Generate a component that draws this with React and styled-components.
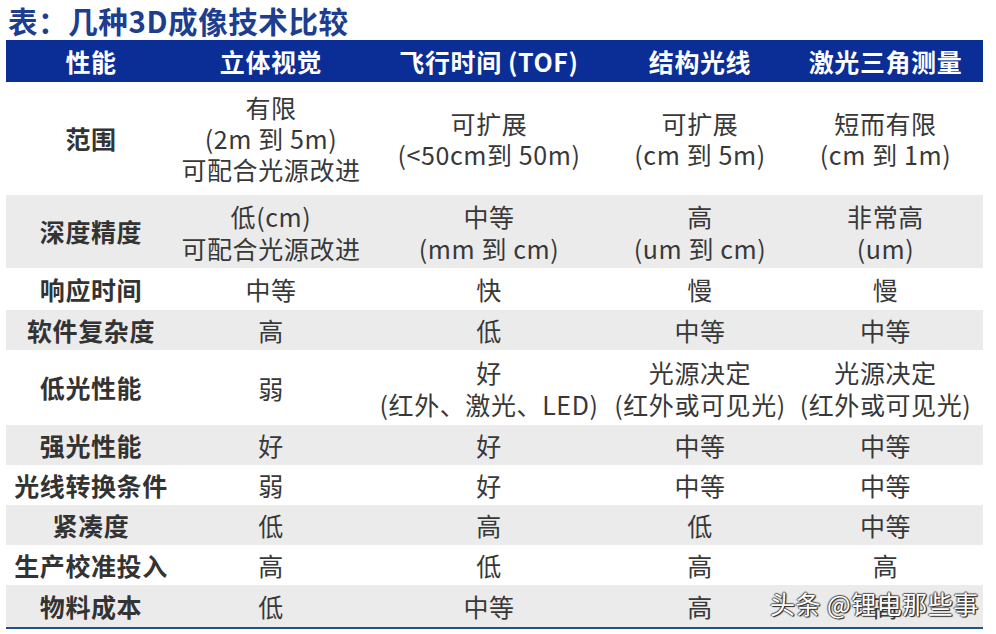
import styled, { createGlobalStyle } from "styled-components";

const GlobalStyle = createGlobalStyle`
  html, body {
    margin: 0;
    padding: 0;
    background: #fff;
  }
  body {
    font-family: "Noto Sans CJK SC", "Noto Sans", sans-serif;
  }
`;

const COLS = "170px 190px 246px 176px 195px";

const Page = styled.div`
  position: relative;
  width: 996px;
  height: 634px;
  padding: 0 0 0 6px;
  box-sizing: border-box;
  overflow: hidden;
`;

const Title = styled.h1`
  margin: 0;
  padding: 0 0 0 2px;
  height: 40px;
  font-size: 29.5px;
  line-height: 40px;
  font-weight: 700;
  color: #1d3d8f;
  letter-spacing: 0.6px;
  white-space: nowrap;
`;

const Table = styled.div`
  width: 977px;
  border-bottom: 2px solid #24508f;
`;

const HeaderRow = styled.div`
  display: grid;
  grid-template-columns: ${COLS};
  height: 42px;
  align-items: center;
  background: #0a2d96;
  color: #fff;
  font-size: 25px;
  font-weight: 700;
  letter-spacing: 0.6px;
`;

const HeadCell = styled.div`
  text-align: center;
  line-height: 1.2;
  white-space: nowrap;
`;

const Row = styled.div`
  display: grid;
  grid-template-columns: ${COLS};
  height: ${(p) => p.$h}px;
  align-items: center;
  background: ${(p) => (p.$shade ? "#ebebeb" : "#fff")};
`;

const Label = styled.div`
  text-align: center;
  font-size: 25px;
  font-weight: 700;
  color: #333;
  line-height: 31px;
  letter-spacing: 0.6px;
  white-space: nowrap;
`;

const Cell = styled.div`
  text-align: center;
  font-size: 25px;
  color: #383838;
  line-height: ${(p) => p.$lh || 31}px;
  letter-spacing: 0.6px;
  white-space: nowrap;
`;

const Watermark = styled.div`
  position: absolute;
  left: 770px;
  top: 586px;
  font-size: 25px;
  line-height: 34px;
  color: #fff;
  letter-spacing: 0.5px;
  text-shadow: 1px 1px 1px #222, -1px 0 1px #555, 0 -1px 1px #555, 1px 0 1px #333;
`;

const rows = [
  { label: "范围", h: 113, cells: [["有限", "(2m 到 5m)", "可配合光源改进"], ["可扩展", "(<50cm到 50m)"], ["可扩展", "(cm 到 5m)"], ["短而有限", "(cm 到 1m)"]] },
  { label: "深度精度", h: 73, lh: 32, cells: [["低(cm)", "可配合光源改进"], ["中等", "(mm 到 cm)"], ["高", "(um 到 cm)"], ["非常高", "(um)"]] },
  { label: "响应时间", h: 42, cells: [["中等"], ["快"], ["慢"], ["慢"]] },
  { label: "软件复杂度", h: 40, cells: [["高"], ["低"], ["中等"], ["中等"]] },
  { label: "低光性能", h: 75, lh: 32, cells: [["弱"], ["好", "(红外、激光、LED)"], ["光源决定", "(红外或可见光)"], ["光源决定", "(红外或可见光)"]] },
  { label: "强光性能", h: 40, cells: [["好"], ["好"], ["中等"], ["中等"]] },
  { label: "光线转换条件", h: 40, cells: [["弱"], ["好"], ["中等"], ["中等"]] },
  { label: "紧凑度", h: 40, cells: [["低"], ["高"], ["低"], ["中等"]] },
  { label: "生产校准投入", h: 40, cells: [["高"], ["低"], ["高"], ["高"]] },
  { label: "物料成本", h: 42, cells: [["低"], ["中等"], ["高"], ["高"]] },
];

const headers = ["性能", "立体视觉", "飞行时间 (TOF)", "结构光线", "激光三角测量"];

export default function App() {
  return (
    <Page>
      <GlobalStyle />
      <Title>表：几种3D成像技术比较</Title>
      <Table>
        <HeaderRow>
          {headers.map((h) => (
            <HeadCell key={h}>{h}</HeadCell>
          ))}
        </HeaderRow>
        {rows.map((r, i) => (
          <Row key={r.label} $h={r.h} $shade={i % 2 === 1}>
            <Label>{r.label}</Label>
            {r.cells.map((lines, j) => (
              <Cell key={j} $lh={r.lh}>
                {lines.map((l, k) => (
                  <div key={k}>{l}</div>
                ))}
              </Cell>
            ))}
          </Row>
        ))}
      </Table>
      <Watermark>头条 @锂电那些事</Watermark>
    </Page>
  );
}
